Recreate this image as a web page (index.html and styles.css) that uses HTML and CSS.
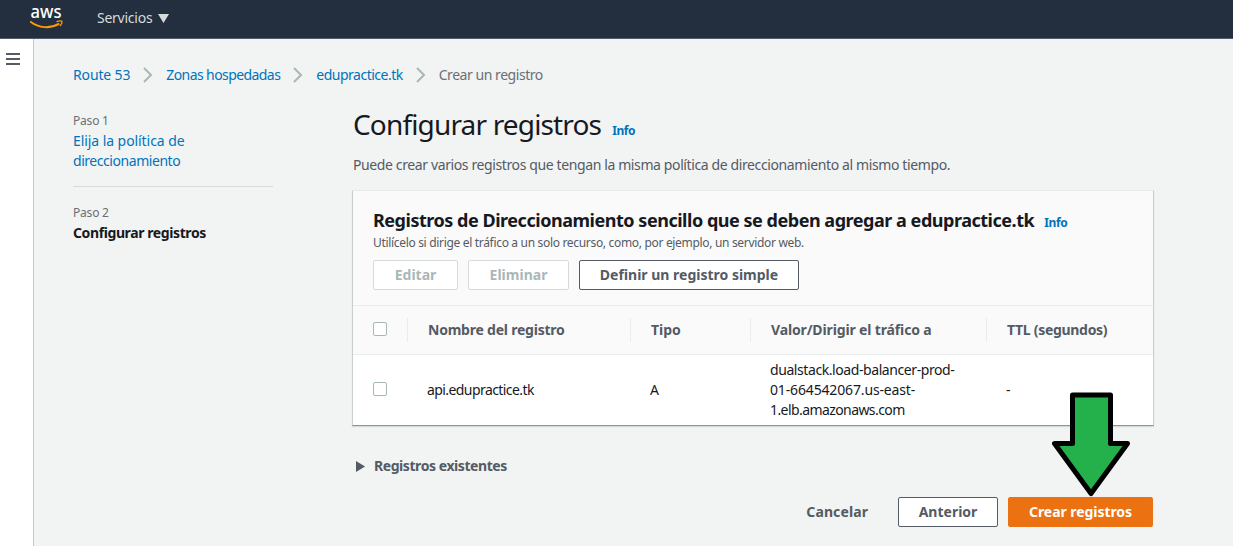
FILE: index.html
```html
<!DOCTYPE html>
<html lang="es">
<head>
<meta charset="utf-8">
<title>Route 53 - Configurar registros</title>
<link rel="stylesheet" href="styles.css">
</head>
<body>
<header class="topbar">
  <svg class="logo" width="34" height="24" viewBox="0 0 34 24">
    <text class="logo-text" x="0.6" y="11" textLength="31" lengthAdjust="spacingAndGlyphs">aws</text>
    <path d="M.2 14.500C9 21.400 20 22 29.300 16.600" fill="none" stroke="#f90" stroke-width="1.900"/>
    <path d="M26.500 14.700C29 13.900 31.300 13.700 31.900 14.300C32.400 15 31.500 17.500 30 19" fill="none" stroke="#f90" stroke-width="1.300"/>
  </svg>
  <span class="services"><span class="t-services">Servicios</span>
    <svg width="11" height="9" viewBox="0 0 11 9"><path d="M0 0H11L5.500 9Z" fill="#d5dbdb"/></svg>
  </span>
</header>
<div class="shell">
  <aside class="rail"><span class="burger"><i></i><i></i><i></i></span></aside>
  <main class="content">
    <nav class="crumbs">
      <a class="c1">Route 53</a>
      <svg class="chev" width="10" height="16" viewBox="0 0 10 16"><path d="M1 1L8 8L1 15"/></svg>
      <a class="c2">Zonas hospedadas</a>
      <svg class="chev" width="10" height="16" viewBox="0 0 10 16"><path d="M1 1L8 8L1 15"/></svg>
      <a class="c3">edupractice.tk</a>
      <svg class="chev" width="10" height="16" viewBox="0 0 10 16"><path d="M1 1L8 8L1 15"/></svg>
      <span class="c4">Crear un registro</span>
    </nav>
    <div class="columns">
      <ol class="steps">
        <li class="step"><small class="step-no">Paso 1</small><a class="step-link">Elija la política de<br><span class="step-tail">direccionamiento</span></a></li>
        <li class="step"><small class="step-no">Paso 2</small><b class="step-now">Configurar registros</b></li>
      </ol>
      <section class="main">
        <div class="heading"><h1 class="title">Configurar registros</h1><a class="info">Info</a></div>
        <p class="lead"><span class="t-lead">Puede crear varios registros que tengan la misma política de direccionamiento al mismo tiempo.</span></p>
        <div class="card">
          <div class="card-head">
            <div class="card-title"><h2 class="subtitle">Registros de Direccionamiento sencillo que se deben agregar a edupractice.tk</h2><a class="info">Info</a></div>
            <p class="hint"><span class="t-hint">Utilícelo si dirige el tráfico a un solo recurso, como, por ejemplo, un servidor web.</span></p>
            <div class="actions">
              <button class="btn disabled edit"><span>Editar</span></button>
              <button class="btn disabled del"><span>Eliminar</span></button>
              <button class="btn define"><span>Definir un registro simple</span></button>
            </div>
          </div>
          <div class="row head">
            <div class="cell"><span class="box"></span></div>
            <div class="cell"><span class="head-name">Nombre del registro</span></div>
            <div class="cell"><span>Tipo</span></div>
            <div class="cell"><span class="head-value">Valor/Dirigir el tráfico a</span></div>
            <div class="cell"><span class="head-ttl">TTL (segundos)</span></div>
          </div>
          <div class="row body">
            <div class="cell"><span class="box"></span></div>
            <div class="cell"><span class="name">api.edupractice.tk</span></div>
            <div class="cell"><span>A</span></div>
            <div class="cell"><span><span class="l1">dualstack.load-balancer-prod-</span><br><span class="l2">01-664542067.us-east-</span><br><span class="l3">1.elb.amazonaws.com</span></span></div>
            <div class="cell"><span>-</span></div>
          </div>
        </div>
        <div class="existing">
          <svg width="9" height="11" viewBox="0 0 9 11"><path d="M0 0L9 5.500L0 11Z" fill="#545b64"/></svg>
          <span class="t-exist">Registros existentes</span>
        </div>
        <div class="footer">
          <span class="cancel">Cancelar</span>
          <button class="btn prev"><span>Anterior</span></button>
          <button class="btn primary"><span>Crear registros</span></button>
        </div>
      </section>
    </div>
  </main>
</div>
<svg class="arrow" width="80" height="106" viewBox="0 0 80 106"><path d="M20.500 3H58.500V51.500H75.500L39 101.500L2.500 51.500H20.500Z" fill="#24b14c" stroke="#000" stroke-width="5" stroke-linejoin="round"/></svg>
</body>
</html>
```
FILE: styles.css
```css
* { box-sizing: border-box; }
body {
  margin: 0;
  height: 546px;
  overflow: hidden;
  display: flex;
  flex-direction: column;
  background: #f2f3f3;
  color: #16191f;
  font: 14px/20px "Noto Sans", "Open Sans", sans-serif;
}
a { color: #0073bb; }
h1, h2, p, ol { margin: 0; padding: 0; }
span, a, h1, h2, b { white-space: nowrap; }
.topbar {
  height: 39px;
  flex: none;
  background: #232f3e;
  border-bottom: 1px solid #545b64;
  display: flex;
  padding: 7px 0 0 30px;
}
.logo { overflow: visible; }
.logo-text { font: 500 18px/20px "Noto Sans", sans-serif; fill: #fff; }
.services { display: flex; align-items: center; gap: 6px; height: 22px; margin-left: 33px; color: #d5dbdb; }
.t-services { letter-spacing: -.25px; }
.shell { flex: 1; display: flex; }
.rail { width: 34px; background: #fff; border-right: 1px solid #c4c8c8; padding: 14px 0 0 6px; }
.burger { display: flex; flex-direction: column; gap: 3px; width: 14px; }
.burger i { height: 2px; background: #545b64; }
.content { flex: 1; padding: 26px 0 0 39px; }
.crumbs { display: flex; align-items: center; height: 20px; gap: 13px; }
.chev { fill: none; stroke: #aab7b8; stroke-width: 2; }
.c1 { letter-spacing: -.15px; }
.c2 { letter-spacing: -.58px; }
.c3 { letter-spacing: -.5px; }
.c4 { letter-spacing: -.45px; }
.c4, .step-no { color: #687078; }
.columns { display: flex; gap: 80px; }
.steps { list-style: none; width: 200px; padding-top: 26px; }
.step { display: flex; flex-direction: column; align-items: flex-start; }
.step:first-child { height: 76px; border-bottom: 1px solid #d5dbdb; margin-bottom: 16px; }
.step-no { font-size: 12px; line-height: 20px; letter-spacing: -.2px; }
.step-link { letter-spacing: -.07px; }
.step-tail { letter-spacing: -.45px; }
.step-now { letter-spacing: -.4px; }
.main { width: 802px; padding-top: 19px; }
.heading { display: flex; align-items: baseline; gap: 11px; height: 61px; }
.title { font-size: 28px; font-weight: 400; line-height: 40px; letter-spacing: -.84px; }
.info { font-size: 12px; font-weight: 700; letter-spacing: -.4px; }
.lead { height: 35px; margin-top: -10px; color: #545b64; }
.t-lead { letter-spacing: -.385px; }
.card { margin-left: -1px; width: 802px; background: #fff; border: 1px solid #c9cfcf; border-top-color: #e8ebeb; border-bottom-color: #879596; height: 236px; box-shadow: 0 1px 1px #d5dbdb; }
.card-head { height: 115px; background: #fafafa; border-bottom: 1px solid #eaeded; padding: 16px 20px 0; }
.card-title { display: flex; align-items: baseline; gap: 10px; height: 26px; }
.subtitle { font-size: 18px; line-height: 26px; letter-spacing: -.47px; }
.hint { font-size: 12px; color: #545b64; height: 27px; }
.t-hint { letter-spacing: -.32px; }
.actions { display: flex; gap: 10px; }
.btn { height: 30px; padding: 0; font: 700 14px/20px "Noto Sans", sans-serif; color: #545b64; background: #fff; border: 1px solid #545b64; border-radius: 2px; display: flex; align-items: center; justify-content: center; }
.disabled { color: #aab7b8; border-color: #d5dbdb; }
.edit { width: 85px; }
.del { width: 101px; }
.define { width: 220px; }
.row { display: grid; grid-template-columns: 54px 223px 120px 236px 167px; }
.cell { display: flex; align-items: center; padding-left: 20px; }
.head { height: 49px; background: #fafafa; border-bottom: 1px solid #eaeded; font-weight: 700; color: #545b64; padding: 12px 0; }
.head .cell + .cell { border-left: 1px solid #eaeded; }
.head-name { letter-spacing: -.22px; }
.head-value { letter-spacing: -.14px; }
.head-ttl { letter-spacing: -.3px; }
.name { letter-spacing: -.58px; }
.l1 { letter-spacing: -.42px; }
.l2 { letter-spacing: -.15px; }
.l3 { letter-spacing: -.58px; }
.body { height: 70px; }
.box { width: 14px; height: 14px; margin-bottom: 2px; border: 1px solid #aab7b8; border-radius: 2px; background: #fff; }
.existing { display: flex; align-items: center; gap: 9px; height: 20px; margin: 30px 0 0 3px; color: #545b64; font-weight: 700; }
.t-exist { letter-spacing: -.43px; }
.footer { display: flex; justify-content: flex-end; align-items: center; margin: 21px 2px 0 0; gap: 10px; }
.cancel { color: #545b64; font-weight: 700; margin-right: 20px; letter-spacing: .1px; }
.prev { width: 100px; }
.primary { width: 145px; background: #ec7211; border-color: #ec7211; color: #fff; letter-spacing: -.05px; }
.arrow { position: absolute; left: 1052px; top: 392px; }
```
